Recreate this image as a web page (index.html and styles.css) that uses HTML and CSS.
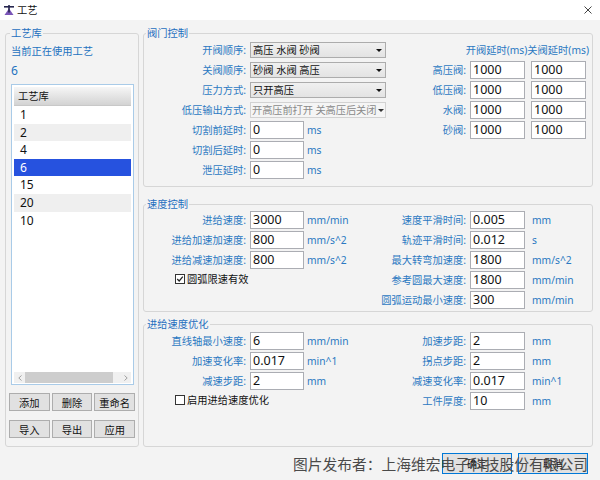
FILE: index.html
```html
<!DOCTYPE html>
<html lang="zh">
<head>
<meta charset="utf-8">
<title>工艺</title>
<link rel="stylesheet" href="styles.css">
</head>
<body>
<div class="window">
  <div class="titlebar">
    <svg class="app-icon" viewBox="0 0 10 10">
      <polygon points="5,3.5 0.5,10 9.5,10" fill="#7a55b8"/>
      <rect x="0" y="1" width="10" height="1.6" fill="#26264f"/>
      <rect x="4.2" y="0" width="1.6" height="7.5" fill="#26264f"/>
    </svg>
    <span class="title">工艺</span>
    <svg class="close" viewBox="0 0 8 8">
      <path d="M0.5 0.5 L7.5 7.5 M7.5 0.5 L0.5 7.5" stroke="#444" stroke-width="1" fill="none"/>
    </svg>
  </div>
  <div class="content">
    <div class="main">
      <fieldset class="group lib">
        <legend>工艺库</legend>
        <div class="lib-body">
          <div class="current-label">当前正在使用工艺</div>
          <div class="current-value">6</div>
          <div class="listbox">
            <div class="list-header">工艺库</div>
            <div class="list-row">1</div>
            <div class="list-row alt">2</div>
            <div class="list-row">4</div>
            <div class="list-row selected">6</div>
            <div class="list-row">15</div>
            <div class="list-row alt">20</div>
            <div class="list-row">10</div>
            <div class="list-fill"></div>
            <div class="hscroll">
              <div class="sb-arrow">
                <svg viewBox="0 0 4 6"><path d="M3.5 0.5 L0.8 3 L3.5 5.5" stroke="#a0a0a0" fill="none"/></svg>
              </div>
              <div class="sb-thumb"></div>
              <div class="sb-track"></div>
              <div class="sb-arrow">
                <svg viewBox="0 0 4 6"><path d="M0.5 0.5 L3.2 3 L0.5 5.5" stroke="#a0a0a0" fill="none"/></svg>
              </div>
            </div>
          </div>
          <div class="btn-row first">
            <button class="btn">添加</button>
            <button class="btn">删除</button>
            <button class="btn">重命名</button>
          </div>
          <div class="btn-row">
            <button class="btn">导入</button>
            <button class="btn">导出</button>
            <button class="btn">应用</button>
          </div>
        </div>
      </fieldset>

      <div class="right">
        <fieldset class="group g1">
          <legend>阀门控制</legend>
          <div class="form">
            <div class="col-left">
              <span class="lbl">开阀顺序:</span>
              <div class="combo"><span class="txt">高压 水阀 砂阀</span><span class="arrow"></span></div>
              <span class="lbl">关阀顺序:</span>
              <div class="combo"><span class="txt">砂阀 水阀 高压</span><span class="arrow"></span></div>
              <span class="lbl">压力方式:</span>
              <div class="combo"><span class="txt">只开高压</span><span class="arrow"></span></div>
              <span class="lbl">低压输出方式:</span>
              <div class="combo disabled"><span class="txt">开高压前打开 关高压后关闭</span><span class="arrow"></span></div>
              <span class="lbl">切割前延时:</span>
              <div class="field"><div class="input">0</div><span class="unit">ms</span></div>
              <span class="lbl">切割后延时:</span>
              <div class="field"><div class="input">0</div><span class="unit">ms</span></div>
              <span class="lbl">泄压延时:</span>
              <div class="field"><div class="input">0</div><span class="unit">ms</span></div>
            </div>
            <div class="col-right">
              <span class="col-head">开阀延时(ms)关阀延时(ms)</span>
              <span class="lbl">高压阀:</span><div class="input">1000</div><div class="input second">1000</div>
              <span class="lbl">低压阀:</span><div class="input">1000</div><div class="input second">1000</div>
              <span class="lbl">水阀:</span><div class="input">1000</div><div class="input second">1000</div>
              <span class="lbl">砂阀:</span><div class="input">1000</div><div class="input second">1000</div>
            </div>
          </div>
        </fieldset>

        <fieldset class="group g2">
          <legend>速度控制</legend>
          <div class="form">
            <div class="col-left">
              <span class="lbl">进给速度:</span>
              <div class="field"><div class="input">3000</div><span class="unit">mm/min</span></div>
              <span class="lbl">进给加速加速度:</span>
              <div class="field"><div class="input">800</div><span class="unit">mm/s^2</span></div>
              <span class="lbl">进给减速加速度:</span>
              <div class="field"><div class="input">800</div><span class="unit">mm/s^2</span></div>
              <label class="check-row">
                <span class="box checked">
                  <svg viewBox="0 0 8 8"><path d="M1.2 4 L3.2 6 L6.8 1.6" stroke="#222" stroke-width="1.2" fill="none"/></svg>
                </span>
                <span>圆弧限速有效</span>
              </label>
            </div>
            <div class="col-right">
              <span class="lbl">速度平滑时间:</span><div class="input">0.005</div><span class="unit">mm</span>
              <span class="lbl">轨迹平滑时间:</span><div class="input">0.012</div><span class="unit">s</span>
              <span class="lbl">最大转弯加速度:</span><div class="input">1800</div><span class="unit">mm/s^2</span>
              <span class="lbl">参考圆最大速度:</span><div class="input">1800</div><span class="unit">mm/min</span>
              <span class="lbl">圆弧运动最小速度:</span><div class="input">300</div><span class="unit">mm/min</span>
            </div>
          </div>
        </fieldset>

        <fieldset class="group g3">
          <legend>进给速度优化</legend>
          <div class="form">
            <div class="col-left">
              <span class="lbl">直线轴最小速度:</span>
              <div class="field"><div class="input">6</div><span class="unit">mm/min</span></div>
              <span class="lbl">加速变化率:</span>
              <div class="field"><div class="input">0.017</div><span class="unit">min^1</span></div>
              <span class="lbl">减速步距:</span>
              <div class="field"><div class="input">2</div><span class="unit">mm</span></div>
              <label class="check-row">
                <span class="box"></span>
                <span>启用进给速度优化</span>
              </label>
            </div>
            <div class="col-right">
              <span class="lbl">加速步距:</span><div class="input">2</div><span class="unit">mm</span>
              <span class="lbl">拐点步距:</span><div class="input">2</div><span class="unit">mm</span>
              <span class="lbl">减速变化率:</span><div class="input">0.017</div><span class="unit">min^1</span>
              <span class="lbl">工件厚度:</span><div class="input">10</div><span class="unit">mm</span>
            </div>
          </div>
        </fieldset>
      </div>
    </div>

    <div class="footer">
      <button class="btn dlg">确定</button>
      <button class="btn dlg">取消</button>
    </div>
  </div>
  <div class="watermark">图片发布者：上海维宏电子科技股份有限公司</div>
</div>
</body>
</html>
```

FILE: styles.css
```css
* { box-sizing: border-box; }
html, body { margin: 0; padding: 0; }
body {
  width: 600px;
  height: 480px;
  overflow: hidden;
  background: #f3f3f3;
  font-family: "Noto Sans", "Noto Sans CJK SC", sans-serif;
  font-size: 10.25px;
  color: #000;
}
.window {
  position: relative;
  width: 600px;
  height: 480px;
  display: flex;
  flex-direction: column;
  background: #f3f3f3;
}
.titlebar {
  height: 20px;
  flex: none;
  background: #fff;
  display: flex;
  align-items: center;
  padding-left: 4px;
}
.app-icon { width: 10px; height: 10px; flex: none; }
.title { margin-left: 3px; line-height: 20px; color: #111; }
.close { margin-left: auto; margin-right: 8px; width: 8px; height: 8px; }

.content {
  flex: 1;
  padding: 6px 7px 0 5px;
  display: flex;
  flex-direction: column;
}
.main {
  height: 421px;
  flex: none;
  display: flex;
  gap: 4px;
}

.group {
  margin: 0;
  padding: 0;
  border: 1px solid #d6d6d6;
  border-radius: 3px;
  min-width: 0;
}
.group legend {
  padding: 0 1px;
  margin-left: 2px;
  line-height: 14px;
  color: #1f6fbf;
}

/* left library group */
.lib { width: 134px; flex: none; }
.lib legend { margin-left: 4px; }
.lib-body { padding-left: 5px; }
.current-label {
  margin-top: 5px;
  line-height: 13px;
  color: #2372c0;
}
.current-value {
  margin-top: 6px;
  line-height: 13px;
  font-size: 12px;
  color: #2372c0;
}
.listbox {
  margin-top: 7px;
  width: 123px;
  height: 301px;
  border: 1px solid #a9cbe8;
  background: #fff;
  padding: 2px 2px 1px 2px;
  display: flex;
  flex-direction: column;
}
.list-header {
  height: 19px;
  flex: none;
  line-height: 19px;
  padding-left: 4px;
  background: linear-gradient(#f6f6f6, #d3d3d3);
  border-bottom: 1px solid #c8c8c8;
  color: #111;
}
.list-row {
  height: 17.6px;
  flex: none;
  line-height: 17.6px;
  padding-left: 6px;
  font-size: 12px;
  color: #111;
}
.list-row.alt { background: #efefef; }
.list-row.selected { background: #2652df; color: #fff; }
.list-fill { flex: 1; }
.hscroll {
  height: 11px;
  flex: none;
  display: flex;
  background: #f0f0f0;
}
.sb-arrow {
  width: 11px;
  flex: none;
  display: flex;
  align-items: center;
  justify-content: center;
}
.sb-arrow svg { width: 4px; height: 6px; }
.sb-thumb { width: 88px; flex: none; background: #cdcdcd; }
.sb-track { flex: 1; }

.btn-row {
  display: flex;
  gap: 2px;
  width: 126px;
  height: 18px;
  margin-left: -2px;
  margin-top: 9px;
}
.btn-row.first { margin-top: 8px; }
.btn {
  font: inherit;
  color: #111;
  background: #e1e1e1;
  border: 1px solid #adadad;
  padding: 0;
  margin: 0;
}
.btn-row .btn { flex: 1; height: 18px; }

/* right groups */
.right {
  width: 450px;
  flex: none;
  display: flex;
  flex-direction: column;
}
.g2 { margin-top: 10px; }
.g3 { margin-top: 5px; flex: 1; }
.form { display: flex; }
.g1 .form { padding-bottom: 6px; }
.g2 .form { margin-top: -1px; padding-bottom: 1px; }

.col-left {
  width: 236px;
  flex: none;
  display: grid;
  grid-template-columns: 102px minmax(0, 1fr);
  column-gap: 4px;
  grid-auto-rows: 20px;
  align-items: center;
  align-content: start;
}
.col-right {
  flex: 1;
  display: grid;
  grid-template-columns: 86px 55px minmax(0, 1fr);
  column-gap: 4px;
  grid-auto-rows: 20px;
  align-items: center;
  align-content: start;
}
.lbl {
  justify-self: end;
  white-space: nowrap;
  line-height: 14px;
  color: #2b79c2;
}
.col-head {
  grid-column: 1 / -1;
  justify-self: end;
  margin-right: 3px;
  white-space: nowrap;
  line-height: 14px;
  color: #2b79c2;
}
.combo {
  width: 136px;
  height: 16px;
  border: 1px solid #acacac;
  background: linear-gradient(#f0f0f0, #e3e3e3);
  display: flex;
  align-items: center;
  padding-left: 2px;
  color: #111;
}
.combo .txt {
  flex: 1;
  min-width: 0;
  overflow: hidden;
  white-space: nowrap;
  line-height: 14px;
}
.combo .arrow {
  flex: none;
  width: 0;
  height: 0;
  border-left: 3px solid transparent;
  border-right: 3px solid transparent;
  border-top: 3px solid #111;
  margin: 0 3px 0 0;
}
.combo.disabled {
  background: #f5f5f5;
  border-color: #d2d2d2;
  color: #8a8a8a;
  padding-left: 1px;
}
.combo.disabled .txt { letter-spacing: -0.1px; }
.combo.disabled .arrow { border-top-color: #333; margin-right: 1px; }

.field { display: flex; align-items: center; }
.input {
  height: 18px;
  border: 1px solid #abadb3;
  background: #fff;
  padding-left: 2px;
  font-size: 12.5px;
  line-height: 16px;
  color: #111;
  white-space: nowrap;
}
.col-left .input { width: 54px; }
.col-right .input { width: 55px; }
.col-right .input.second { margin-left: 2px; }
.unit {
  margin-left: 3px;
  white-space: nowrap;
  line-height: 14px;
  color: #2b79c2;
}

.check-row {
  grid-column: 1 / -1;
  align-self: start;
  margin-top: 2px;
  height: 14px;
  padding-left: 31px;
  display: flex;
  align-items: center;
  gap: 2px;
  line-height: 14px;
  color: #111;
}
.box {
  width: 10px;
  height: 10px;
  flex: none;
  border: 1px solid #333;
  background: #fff;
  display: flex;
  align-items: center;
  justify-content: center;
}
.box svg { width: 8px; height: 8px; }

.footer {
  display: flex;
  justify-content: flex-end;
  gap: 6px;
  margin-top: 6px;
  padding-right: 5px;
}
.btn.dlg {
  width: 70px;
  height: 21px;
  border-color: #0078d7;
}

.watermark {
  position: absolute;
  left: 293px;
  top: 455px;
  font-family: "Noto Sans CJK SC", sans-serif;
  font-size: 14.75px;
  line-height: 18px;
  color: #4a4a4a;
  white-space: nowrap;
}
```
